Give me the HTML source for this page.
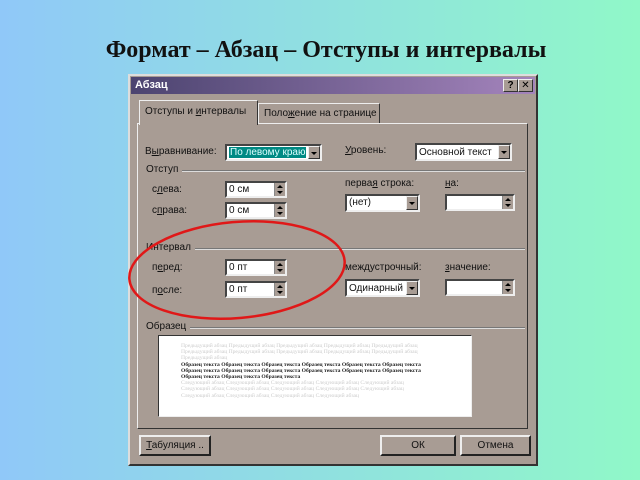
<!DOCTYPE html>
<html><head><meta charset="utf-8"><style>
*{margin:0;padding:0;box-sizing:border-box}
body{width:640px;height:480px;overflow:hidden;position:relative;background:linear-gradient(90deg,#90c8f8,#90f8c8);font-family:"Liberation Sans","DejaVu Sans",sans-serif;}
.a{position:absolute;white-space:nowrap}
h1{position:absolute;left:0;width:652px;top:37px;text-align:center;font:bold 24px "Liberation Serif",serif;color:#111;white-space:nowrap}
.dlg{position:absolute;left:128px;top:74px;width:410px;height:392px;background:#a89c94;border:2px solid;border-color:#ddd #333 #333 #ddd}
.tb{position:absolute;left:131px;top:77px;width:404px;height:17px;background:linear-gradient(90deg,#4c4470,#a484bc);color:#fff;font-size:11px;font-weight:bold;padding:2px 4px}
.bx{position:absolute;background:#a89c94;border:1px solid;border-color:#eee #333 #333 #eee;font-size:10px;text-align:center;line-height:12px;font-weight:bold}
.panel{position:absolute;left:137px;top:123px;width:391px;height:306px;border:1px solid;border-color:#eee #333 #333 #eee}
.tab{position:absolute;border:1px solid;border-bottom:none;border-color:#eee #333 #333 #eee;background:#a89c94;font-size:10px;padding:5px 5px;color:#111;white-space:nowrap}
.l{position:absolute;font-size:10px;color:#111;white-space:nowrap}
.in{position:absolute;background:#fff;border:2px solid;border-color:#444 #eee #eee #444;font-size:10px;padding:1px 2px;color:#111;white-space:nowrap}
.sp{position:absolute;right:0;top:0;width:11px;height:100%;background:#a89c94;border-left:1px solid #888}
.sp:before{content:"";position:absolute;left:2px;top:2px;border:3px solid transparent;border-bottom:3px solid #000;border-top:0}
.sp:after{content:"";position:absolute;left:2px;bottom:2px;border:3px solid transparent;border-top:3px solid #000;border-bottom:0}
.dd{position:absolute;right:0;top:0;width:12px;height:100%;background:#a89c94;border:1px solid;border-color:#eee #333 #333 #eee}
.dd:after{content:"";position:absolute;left:2px;top:5px;border:3px solid transparent;border-top:3px solid #000;border-bottom:0}
.hr{position:absolute;height:2px;border-top:1px solid #777;border-bottom:1px solid #ddd}
.btn{position:absolute;background:#a89c94;border:2px solid;border-color:#eee #222 #222 #eee;font-size:10px;text-align:center;line-height:17px;color:#111}
.pv{position:absolute;left:158px;top:335px;width:314px;height:82px;background:#fff;border:1px solid;border-color:#333 #eee #eee #333;font:5.6px/6.2px "Liberation Serif",serif;padding:7px 40px 0 22px;white-space:normal}
.g{color:#ccc}.k{color:#222;font-weight:bold}
</style></head><body>
<h1>Формат – Абзац – Отступы и интервалы</h1>
<div class="dlg"></div>
<div class="tb">Абзац</div>
<div class="bx" style="left:503px;top:79px;width:15px;height:13px">?</div>
<div class="bx" style="left:518px;top:79px;width:15px;height:13px">✕</div>
<div class="panel"></div>
<div class="tab" style="left:258px;top:103px;width:122px;height:20px;padding-top:4px">Поло<u>ж</u>ение на странице</div>
<div class="tab" style="left:139px;top:100px;width:119px;height:25px">Отступы и <u>и</u>нтервалы</div>
<div class="l" style="left:145px;top:146px">В<u>ы</u>равнивание:</div>
<div class="in" style="left:225px;top:144px;width:97px;height:17px"><span style="background:#008a84;color:#dff;padding:0 1px">По левому краю</span><div class="dd"></div></div>
<div class="l" style="left:345px;top:145px"><u>У</u>ровень:</div>
<div class="in" style="left:415px;top:143px;width:97px;height:18px;padding-top:2px">Основной текст<div class="dd"></div></div>
<div class="l" style="left:146px;top:164px">Отступ</div><div class="hr" style="left:182px;top:170px;width:343px"></div>
<div class="l" style="left:152px;top:184px">с<u>л</u>ева:</div>
<div class="in" style="left:225px;top:181px;width:62px;height:17px">0 см<div class="sp"></div></div>
<div class="l" style="left:152px;top:205px">с<u>п</u>рава:</div>
<div class="in" style="left:225px;top:202px;width:62px;height:17px">0 см<div class="sp"></div></div>
<div class="l" style="left:345px;top:178px">перва<u>я</u> строка:</div>
<div class="l" style="left:445px;top:178px"><u>н</u>а:</div>
<div class="in" style="left:345px;top:194px;width:75px;height:18px">(нет)<div class="dd"></div></div>
<div class="in" style="left:445px;top:194px;width:70px;height:17px"><div class="sp"></div></div>
<div class="l" style="left:146px;top:242px">Интервал</div><div class="hr" style="left:195px;top:248px;width:330px"></div>
<div class="l" style="left:152px;top:262px">п<u>е</u>ред:</div>
<div class="in" style="left:225px;top:259px;width:62px;height:17px">0 пт<div class="sp"></div></div>
<div class="l" style="left:152px;top:285px">п<u>о</u>сле:</div>
<div class="in" style="left:225px;top:281px;width:62px;height:17px">0 пт<div class="sp"></div></div>
<div class="l" style="left:345px;top:262px">междустрочный:</div>
<div class="l" style="left:445px;top:262px"><u>з</u>начение:</div>
<div class="in" style="left:345px;top:279px;width:75px;height:18px;padding-top:2px">Одинарный<div class="dd"></div></div>
<div class="in" style="left:445px;top:279px;width:70px;height:17px"><div class="sp"></div></div>
<div class="l" style="left:146px;top:321px">Образец</div><div class="hr" style="left:190px;top:327px;width:335px"></div>
<div class="pv"><span class="g">Предыдущий абзац Предыдущий абзац Предыдущий абзац Предыдущий абзац Предыдущий абзац Предыдущий абзац Предыдущий абзац Предыдущий абзац Предыдущий абзац Предыдущий абзац Предыдущий абзац</span><br><span class="k">Образец текста Образец текста Образец текста Образец текста Образец текста Образец текста Образец текста Образец текста Образец текста Образец текста Образец текста Образец текста Образец текста Образец текста Образец текста</span><br><span class="g">Следующий абзац Следующий абзац Следующий абзац Следующий абзац Следующий абзац Следующий абзац Следующий абзац Следующий абзац Следующий абзац Следующий абзац Следующий абзац Следующий абзац Следующий абзац Следующий абзац</span></div>
<div class="btn" style="left:139px;top:435px;width:72px;height:21px"><u>Т</u>абуляция ..</div>
<div class="btn" style="left:380px;top:435px;width:76px;height:21px">ОК</div>
<div class="btn" style="left:460px;top:435px;width:71px;height:21px">Отмена</div>
<svg class="a" style="left:0;top:0" width="640" height="480"><ellipse cx="237" cy="270" rx="108" ry="48" transform="rotate(-5 237 270)" fill="none" stroke="#e01818" stroke-width="2.5"/></svg>
</body></html>
